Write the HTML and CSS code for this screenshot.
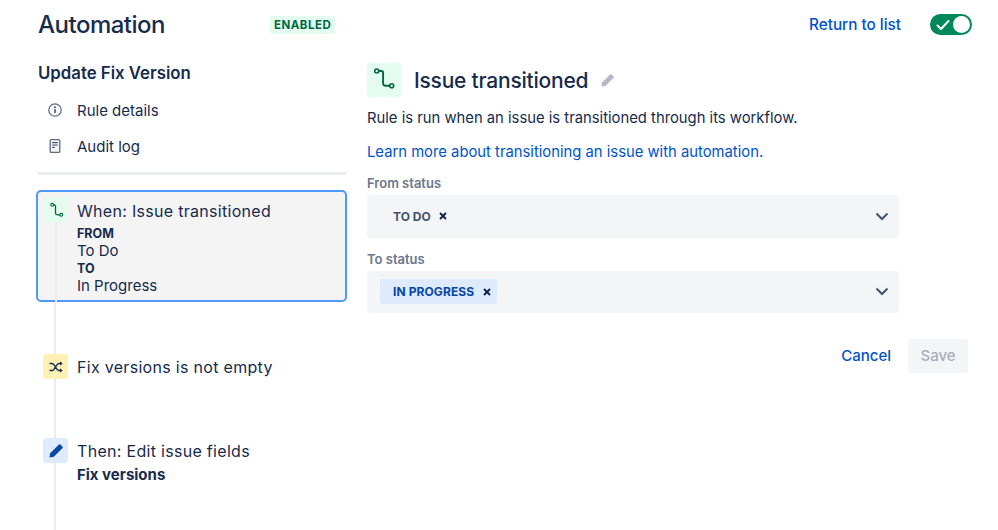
FILE: index.html
```html
<!DOCTYPE html>
<html lang="en">
<head>
<meta charset="utf-8">
<title>Automation</title>
<link rel="stylesheet" href="styles.css">
</head>
<body>
<header class="top">
  <h1 class="title">Automation</h1>
  <span class="badge">ENABLED</span>
  <a class="return" href="#">Return to list</a>
  <span class="toggle">
    <svg class="toggle-check" viewBox="0 0 14 12" width="14" height="12"><path d="M1.5 6.5 5 10l7.5-8" fill="none" stroke="#fff" stroke-width="2" stroke-linecap="round" stroke-linejoin="round"/></svg>
    <span class="knob"></span>
  </span>
</header>
<main class="layout">
  <aside class="side">
    <h2 class="rule-name">Update Fix Version</h2>
    <nav class="nav">
      <a class="nav-item" href="#">
        <svg class="nav-icon" viewBox="0 0 16 16" width="16" height="16"><circle cx="8" cy="8" r="6.2" fill="none" stroke="#5e6c84" stroke-width="1.3"/><circle cx="8" cy="5.2" r="1" fill="#42526e"/><rect x="7.2" y="7" width="1.6" height="4.2" rx=".6" fill="#42526e"/></svg>
        Rule details
      </a>
      <a class="nav-item" href="#">
        <svg class="nav-icon" viewBox="0 0 16 16" width="16" height="16"><rect x="3.2" y="1.6" width="9.6" height="12.8" rx="1" fill="#f4f5f7" stroke="#5e6c84" stroke-width="1.3"/><path d="M5.2 4.6h5.6M5.2 7h5.6M5.2 9.4h2.6" stroke="#42526e" stroke-width="1.1"/></svg>
        Audit log
      </a>
    </nav>
    <div class="divider"></div>
    <section class="card">
      <div class="rail">
        <span class="node node-green">
          <svg viewBox="0 0 16 16" width="16" height="16"><path d="M5.500 2.800h.8c.8 0 1.200.4 1.200 1.200v7c0 1.100.7 1.800 1.800 1.800h2.700" fill="none" stroke="#006644" stroke-width="1.300"/><circle cx="4.200" cy="2.800" r="1.400" fill="#e3fcef" stroke="#006644" stroke-width="1.100"/><circle cx="13.200" cy="12.800" r="1.400" fill="#e3fcef" stroke="#006644" stroke-width="1.100"/></svg>
        </span>
        <span class="rail-line"></span>
      </div>
      <div class="card-body">
        <div class="step-title">When: Issue transitioned</div>
        <div class="step-strong step-strong-sm">FROM</div>
        <div class="step-line">To Do</div>
        <div class="step-strong step-strong-sm">TO</div>
        <div class="step-line">In Progress</div>
      </div>
    </section>
    <div class="timeline">
      <div class="step step-cond">
        <span class="node node-yellow">
          <svg viewBox="0 0 16 16" width="16" height="16"><path d="M1.500 4.500h2.300c1 0 1.600.4 2.100 1.200l3.200 4.700c.5.800 1.100 1.100 2 1.100h2.400M1.500 11.500h2.300c1 0 1.600-.4 2.100-1.200l3.200-4.600c.5-.8 1.100-1.200 2-1.200h2.400" fill="none" stroke="#172b4d" stroke-width="1.300"/><path d="M12 2.500l2.700 2-2.700 2zM12 9.500l2.700 2-2.700 2z" fill="#172b4d"/></svg>
        </span>
        <div class="step-title">Fix versions is not empty</div>
      </div>
      <div class="step">
        <span class="node node-blue">
          <svg viewBox="0 0 16 16" width="16" height="16"><path d="M10.700 1.700a1.300 1.300 0 0 1 1.800 0l1.800 1.800a1.300 1.300 0 0 1 0 1.800L5.800 13.800 1.500 14.500l.7-4.300z" fill="#0747a6"/></svg>
        </span>
        <div class="step-text">
          <div class="step-title">Then: Edit issue fields</div>
          <div class="step-strong">Fix versions</div>
        </div>
      </div>
    </div>
  </aside>
  <section class="detail">
    <div class="detail-head">
      <span class="detail-icon">
        <svg viewBox="0 0 24 24" width="24" height="24"><path d="M6.500 3h3c1 0 1.600.6 1.600 1.600v10.600c0 1.600.9 2.500 2.500 2.500h4.300" fill="none" stroke="#006644" stroke-width="1.900"/><circle cx="4.700" cy="3" r="2" fill="#e3fcef" stroke="#006644" stroke-width="1.600"/><circle cx="19.700" cy="17.700" r="2" fill="#e3fcef" stroke="#006644" stroke-width="1.600"/></svg>
      </span>
      <h2 class="detail-title">Issue transitioned</h2>
      <svg class="edit" viewBox="0 0 16 16" width="15" height="15"><path d="M10.700 1.700a1.300 1.300 0 0 1 1.800 0l1.800 1.800a1.300 1.300 0 0 1 0 1.800L5.800 13.800 1.500 14.500l.7-4.300z" fill="#b3bac5"/></svg>
    </div>
    <p class="desc">Rule is run when an issue is transitioned through its workflow.</p>
    <p class="learn"><a href="#">Learn more about transitioning an issue with automation.</a></p>
    <label class="field-label">From status</label>
    <div class="select">
      <span class="tag">TO DO <svg class="x" viewBox="0 0 8 8" width="8" height="8"><path d="M1 1l6 6M7 1 1 7" stroke="#091e42" stroke-width="1.800"/></svg></span>
      <svg class="chev" viewBox="0 0 14 9" width="14" height="9"><path d="M1.500 1.500 7 7l5.500-5.500" fill="none" stroke="#42526e" stroke-width="2"/></svg>
    </div>
    <label class="field-label">To status</label>
    <div class="select">
      <span class="tag tag-blue">IN PROGRESS <svg class="x" viewBox="0 0 8 8" width="8" height="8"><path d="M1 1l6 6M7 1 1 7" stroke="#091e42" stroke-width="1.800"/></svg></span>
      <svg class="chev" viewBox="0 0 14 9" width="14" height="9"><path d="M1.500 1.500 7 7l5.500-5.500" fill="none" stroke="#42526e" stroke-width="2"/></svg>
    </div>
    <div class="actions">
      <a class="cancel" href="#">Cancel</a>
      <button class="save" type="button">Save</button>
    </div>
  </section>
</main>
</body>
</html>
```
FILE: styles.css
```css
* { box-sizing: border-box; }
html, body { height: 100%; }
body {
  margin: 0;
  height: 530px;
  overflow: hidden;
  background: #fff;
  color: #172b4d;
  font-family: Inter, "Liberation Sans", sans-serif;
  font-size: 15px;
}
a { text-decoration: none; color: inherit; }
h1, h2, p { margin: 0; }

.top {
  display: flex;
  align-items: center;
  height: 48px;
  padding: 1px 26px 0 38px;
}
.title {
  font-size: 24px;
  font-weight: 500;
  letter-spacing: -0.5px;
  width: 232px;
}
.badge {
  background: #e3fcef;
  color: #006644;
  font-size: 11.500px;
  font-weight: 700;
  letter-spacing: .5px;
  padding: 0 4px;
  height: 18px;
  line-height: 18px;
  border-radius: 3px;
}
.return {
  margin-left: auto;
  color: #0052cc;
  font-size: 15.300px;
  font-weight: 500;
}
.toggle {
  margin-left: 29px;
  width: 42px;
  height: 21px;
  border-radius: 11px;
  background: #00875a;
  display: flex;
  align-items: center;
  justify-content: space-between;
  padding: 0 2px 0 6px;
}
.knob { width: 17px; height: 17px; border-radius: 50%; background: #fff; }

.layout {
  display: flex;
  padding: 15px 0 0 37px;
}
.side { width: 309px; flex: none; }
.rule-name {
  font-size: 16.800px;
  font-weight: 600;
  line-height: 20px;
  padding-left: 1px;
}
.nav { display: flex; flex-direction: column; margin-top: 9px; }
.nav-item {
  display: flex;
  align-items: center;
  gap: 14px;
  height: 36px;
  padding-left: 10px;
  font-size: 15px;
}
.nav-icon { flex: none; }
.divider { height: 3px; background: #ebecf0; margin: 8px 0 15px 1px; }

.card {
  display: flex;
  margin-left: -1px;
  width: 311px;
  height: 112px;
  border: 2px solid #4c9aff;
  border-radius: 5px;
  background: #f4f4f5;
  padding: 5px 0 0 5px;
}
.rail { display: flex; flex-direction: column; align-items: center; width: 25px; flex: none; }
.rail-line { flex: 1; width: 2px; margin-bottom: -2px; background: #ebecf0; }
.card-body { margin-left: 9px; padding-top: 3px; }

.node {
  width: 25px;
  height: 25px;
  flex: none;
  display: flex;
  align-items: center;
  justify-content: center;
  border-radius: 3px;
}
.node-green { background: #e3fcef; }
.node-yellow { background: #fff0b3; }
.node-blue { background: #deebff; }

.step-title { font-size: 16px; letter-spacing: .3px; line-height: 22px; }
.step-strong { font-size: 15px; font-weight: 700; line-height: 18px; margin-top: 4px; }
.step-strong-sm { font-size: 12.500px; line-height: 17px; margin-top: 3px; }
.step-line { font-size: 15px; line-height: 18px; }
.step-line + .step-strong-sm { margin-top: 0; }
.step-text { padding-top: 2px; }

.timeline {
  margin-left: 17px;
  border-left: 2px solid #ebecf0;
  padding-top: 52px;
  height: 229px;
}
.step {
  display: flex;
  gap: 9px;
  margin-left: -13px;
}
.step-cond { align-items: center; margin-bottom: 59px; }

.detail { margin-left: 21px; width: 532px; }
.detail-head { display: flex; align-items: center; height: 34px; }
.detail-icon {
  width: 34px;
  height: 34px;
  border-radius: 4px;
  background: #e3fcef;
  display: flex;
  align-items: center;
  justify-content: center;
}
.detail-title { font-size: 21px; font-weight: 500; letter-spacing: -.22px; margin-left: 13px; }
.edit { margin-left: 12px; }
.desc { font-size: 14.800px; line-height: 20px; margin-top: 11px; }
.learn { font-size: 14.800px; line-height: 20px; margin-top: 14px; color: #0052cc; }
.field-label {
  display: block;
  font-size: 13px;
  font-weight: 600;
  color: #6b778c;
  line-height: 16px;
  margin-top: 13px;
}
.select {
  margin-top: 4px;
  height: 42.500px;
  border-radius: 4px;
  background: #f4f5f7;
  display: flex;
  align-items: center;
  justify-content: space-between;
  padding: 0 10px 0 13px;
}
.tag {
  display: inline-flex;
  align-items: center;
  gap: 8px;
  height: 25px;
  padding: 0 6px 0 13px;
  font-size: 12px;
  font-weight: 700;
  color: #42526e;
  border-radius: 3px;
}
.tag-blue { background: #deebff; color: #0747a6; gap: 9px; letter-spacing: .1px; }
.actions {
  display: flex;
  justify-content: flex-end;
  align-items: center;
  gap: 17px;
  margin: 25.500px -69px 0 0;
}
.cancel { color: #0052cc; font-size: 15px; font-weight: 500; }
.save {
  width: 60px;
  height: 34px;
  border: 0;
  border-radius: 3px;
  background: #f4f5f7;
  color: #a5adba;
  font: 500 15px Inter, "Liberation Sans", sans-serif;
}
```
